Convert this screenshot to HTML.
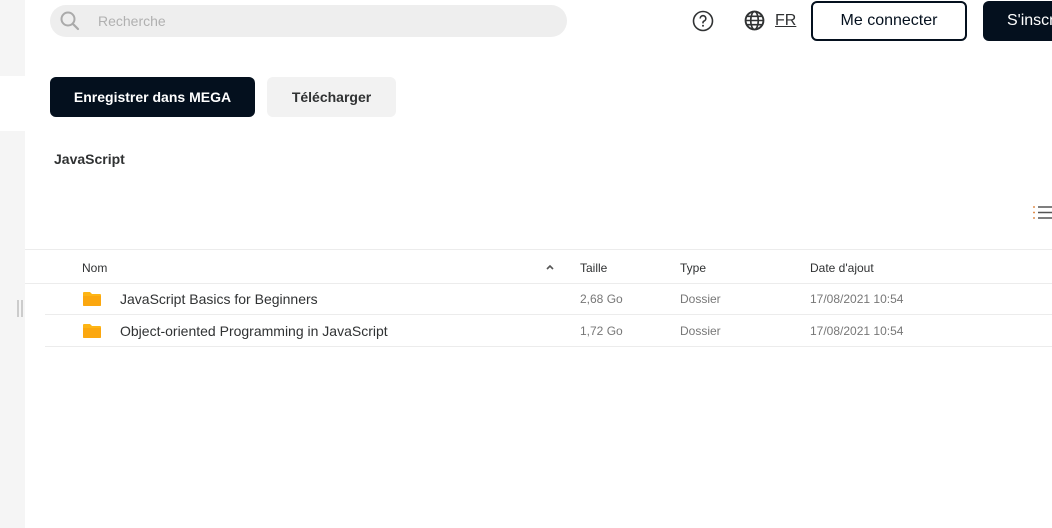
<!DOCTYPE html>
<html><head><meta charset="utf-8"><style>
*{margin:0;padding:0;box-sizing:border-box}
body{width:1052px;height:528px;overflow:hidden;background:#fff;font-family:"Liberation Sans",sans-serif;position:relative;color:#303233}
.a{position:absolute}
</style></head><body>
<div class="a" style="left:0;top:0;width:25px;height:528px;background:#f5f5f5"></div>
<div class="a" style="left:0;top:76px;width:25px;height:55px;background:#fff"></div>
<div class="a" style="left:17px;top:300px;width:2px;height:17px;background:#ccc"></div>
<div class="a" style="left:21px;top:300px;width:2px;height:17px;background:#ccc"></div>

<div class="a" style="left:50px;top:5px;width:517px;height:32px;border-radius:16px;background:#eeeeee"></div>
<svg class="a" style="left:59px;top:10px" width="22" height="22" viewBox="0 0 22 22"><circle cx="9" cy="9" r="6.5" fill="none" stroke="#aaa" stroke-width="2"/><path d="M14 14l5 5" stroke="#aaa" stroke-width="2.2" stroke-linecap="round"/></svg>
<div class="a" style="left:98px;top:13px;font-size:14px;color:#b0b0b0">Recherche</div>

<svg class="a" style="left:692px;top:10px" width="22" height="22" viewBox="0 0 22 22"><circle cx="11" cy="11" r="9.5" fill="none" stroke="#303233" stroke-width="1.6"/><path d="M8.2 8.5a2.8 2.8 0 1 1 3.8 2.6c-.7.3-1 .8-1 1.5v.8" fill="none" stroke="#303233" stroke-width="1.6"/><circle cx="11" cy="15.7" r="1" fill="#303233"/></svg>
<svg class="a" style="left:744px;top:10px" width="21" height="21" viewBox="0 0 20 20"><circle cx="10" cy="10" r="8.5" fill="none" stroke="#303233" stroke-width="1.8"/><ellipse cx="10" cy="10" rx="3.6" ry="8.5" fill="none" stroke="#303233" stroke-width="1.6"/><path d="M1.5 10h17M3 6h14M3 14h14" stroke="#303233" stroke-width="1.5"/></svg>
<div class="a" style="left:775px;top:12px;font-size:16px;text-decoration:underline">FR</div>
<div class="a" style="left:811px;top:1px;width:156px;height:40px;border:2px solid #04101e;border-radius:6px;font-size:16px;color:#04101e;text-align:center;line-height:36px">Me connecter</div>
<div class="a" style="left:983px;top:1px;width:90px;height:40px;background:#04101e;border-radius:6px;font-size:16px;color:#fff;line-height:40px;padding-left:24px;white-space:nowrap">S'inscrire</div>

<div class="a" style="left:50px;top:77px;width:205px;height:40px;background:#04101e;border-radius:6px;color:#fff;font-size:14px;font-weight:bold;text-align:center;line-height:40px">Enregistrer dans MEGA</div>
<div class="a" style="left:267px;top:77px;width:129px;height:40px;background:#f2f2f2;border-radius:6px;color:#303233;font-size:14px;font-weight:bold;text-align:center;line-height:40px">Télécharger</div>

<div class="a" style="left:54px;top:151px;font-size:14px;font-weight:bold">JavaScript</div>

<svg class="a" style="left:1033px;top:205px" width="19" height="16" viewBox="0 0 19 16"><path d="M0 2h2M0 7.5h2M0 13h2" stroke="#e09050" stroke-width="1.6"/><path d="M5 2h14M5 7.5h14M5 13h14" stroke="#555" stroke-width="1.6"/></svg>

<div class="a" style="left:25px;top:249px;width:1027px;height:1px;background:#ececec"></div>
<div class="a" style="left:25px;top:283px;width:1027px;height:1px;background:#ececec"></div>
<div class="a" style="left:45px;top:314px;width:1007px;height:1px;background:#ececec"></div>
<div class="a" style="left:45px;top:346px;width:1007px;height:1px;background:#ececec"></div>

<div class="a" style="left:82px;top:261px;font-size:12px">Nom</div>
<svg class="a" style="left:545px;top:263px" width="10" height="8" viewBox="0 0 10 8"><path d="M2 6l3-3 3 3" fill="none" stroke="#555" stroke-width="1.6"/></svg>
<div class="a" style="left:580px;top:261px;font-size:12px">Taille</div>
<div class="a" style="left:680px;top:261px;font-size:12px">Type</div>
<div class="a" style="left:810px;top:261px;font-size:12px">Date d'ajout</div>

<svg class="a" style="left:82px;top:291px" width="20" height="16" viewBox="0 0 20 16"><path d="M1 2a1 1 0 0 1 1-1h6l2 2h8a1 1 0 0 1 1 1v10a1 1 0 0 1-1 1H2a1 1 0 0 1-1-1z" fill="#fdb515"/><path d="M1 5h18v9a1 1 0 0 1-1 1H2a1 1 0 0 1-1-1z" fill="#fba70f"/></svg>
<div class="a" style="left:120px;top:291px;font-size:14px">JavaScript Basics for Beginners</div>
<div class="a" style="left:580px;top:292px;font-size:12px;color:#777">2,68 Go</div>
<div class="a" style="left:680px;top:292px;font-size:12px;color:#777">Dossier</div>
<div class="a" style="left:810px;top:292px;font-size:12px;color:#777">17/08/2021 10:54</div>

<svg class="a" style="left:82px;top:323px" width="20" height="16" viewBox="0 0 20 16"><path d="M1 2a1 1 0 0 1 1-1h6l2 2h8a1 1 0 0 1 1 1v10a1 1 0 0 1-1 1H2a1 1 0 0 1-1-1z" fill="#fdb515"/><path d="M1 5h18v9a1 1 0 0 1-1 1H2a1 1 0 0 1-1-1z" fill="#fba70f"/></svg>
<div class="a" style="left:120px;top:323px;font-size:14px">Object-oriented Programming in JavaScript</div>
<div class="a" style="left:580px;top:324px;font-size:12px;color:#777">1,72 Go</div>
<div class="a" style="left:680px;top:324px;font-size:12px;color:#777">Dossier</div>
<div class="a" style="left:810px;top:324px;font-size:12px;color:#777">17/08/2021 10:54</div>
</body></html>
